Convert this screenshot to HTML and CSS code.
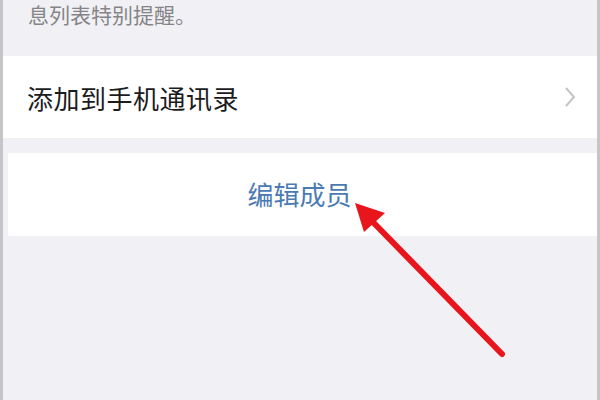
FILE: index.html
```html
<!DOCTYPE html>
<html lang="zh">
<head>
<meta charset="utf-8">
<link rel="stylesheet" href="styles.css">
</head>
<body>
<div class="screen">
  <div class="note">息列表特别提醒。</div>
  <div class="card row">
    <span class="label">添加到手机通讯录</span>
    <svg class="chev" width="14" height="22" viewBox="0 0 14 22"><path d="M3 2 L11 11 L3 20" fill="none" stroke="#c4c4c8" stroke-width="2"/></svg>
  </div>
  <div class="card action">
    <span class="link">编辑成员</span>
  </div>
  <svg class="arrow" width="600" height="400" viewBox="0 0 600 400">
    <line x1="502" y1="354" x2="368" y2="217" stroke="#e8161c" stroke-width="6" stroke-linecap="round"/>
    <polygon points="355,203 364,232 385,213" fill="#e8161c"/>
  </svg>
</div>
</body>
</html>
```
FILE: styles.css
```css
html, body {
  margin: 0;
  padding: 0;
  width: 600px;
  height: 400px;
  overflow: hidden;
}
body {
  font-family: "Noto Sans CJK SC", "Noto Sans", sans-serif;
  background: #f2f2f6;
}
.screen {
  position: relative;
  width: 600px;
  height: 400px;
  box-sizing: border-box;
  border-left: 3px solid #c6c6c8;
  border-right: 3px solid #c6c6c8;
  background: #f1f1f5;
}
.note {
  height: 56px;
  box-sizing: border-box;
  padding: 0 0 0 25px;
  font-size: 21px;
  line-height: 28px;
  color: #858587;
}
.card {
  background: #ffffff;
  box-sizing: border-box;
}
.row {
  height: 82px;
  display: flex;
  align-items: center;
  justify-content: space-between;
  padding: 0 20px 0 24px;
  margin-bottom: 15px;
}
.label {
  font-size: 26px;
  letter-spacing: 0.5px;
  color: #1c1c1e;
}
.chev {
  display: block;
}
.action {
  height: 83px;
  margin-left: 5px;
  display: flex;
  align-items: center;
  justify-content: center;
}
.link {
  font-size: 26px;
  color: #4b7ab3;
  margin-left: -6px;
  margin-top: -2px;
}
.arrow {
  position: absolute;
  left: -3px;
  top: 0;
}
```
